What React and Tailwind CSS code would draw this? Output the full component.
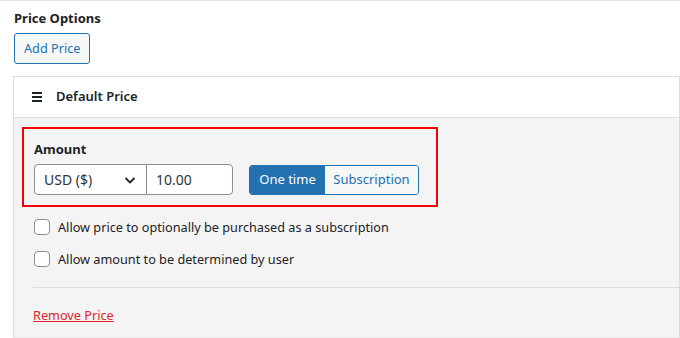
import React from 'react';

const font = { fontFamily: '"Noto Sans", "Open Sans", sans-serif' };

const Checkbox = ({ label }) => (
  <label className="flex items-center h-[16px]">
    <span className="w-[16px] h-[16px] rounded-[4px] border border-[#8c8f94] bg-white shrink-0" />
    <span className="ml-[8px] text-[12.7px] text-[#1d2327] leading-none">{label}</span>
  </label>
);

const App = () => {
  return (
    <div
      className="w-[680px] h-[338px] bg-white border-t border-[#e2e4e7] overflow-hidden flex flex-col"
      style={font}
    >
      {/* Price options heading */}
      <div className="pl-[14px] pt-[9px] text-[13px] font-bold text-[#1d2327] leading-[17px]">
        Price Options
      </div>
      <div className="pl-[14px] pt-[6px]">
        <button className="h-[31px] px-[9px] rounded-[3px] border border-[#2271b1] bg-[#f6f7f7] text-[#2271b1] text-[12.7px] leading-none">
          Add Price
        </button>
      </div>

      {/* Default price panel */}
      <div className="ml-[13px] mt-[12px] flex-1 border border-[#dcdcde] border-b-[#e8e8e8] flex flex-col">
        <div className="h-[41px] bg-white border-b border-[#dcdcde] flex items-center pl-[18px]">
          <svg width="10" height="10" viewBox="0 0 10 10" className="text-[#1d2327]">
            <rect x="0" y="0" width="10" height="2" fill="currentColor" />
            <rect x="0" y="4" width="10" height="2" fill="currentColor" />
            <rect x="0" y="8" width="10" height="2" fill="currentColor" />
          </svg>
          <span className="ml-[14px] text-[13px] font-semibold text-[#1d2327]">Default Price</span>
        </div>

        <div className="flex-1 bg-[#f4f4f4] pt-[9px] pl-[8px]">
          {/* Amount box */}
          <div className="w-[416px] h-[80px] border-2 border-[#f5000a] pl-[10px] pt-[12px]">
            <div className="text-[13px] font-bold text-[#1d2327] leading-[17px]">Amount</div>
            <div className="flex items-center mt-[6px]">
              <div className="flex h-[31px] rounded-[4px] border border-[#8c8f94] bg-white">
                <div className="w-[112px] flex items-center justify-between pl-[9px] pr-[9px] border-r border-[#8c8f94]">
                  <span className="text-[14px] text-[#2c3338]">USD ($)</span>
                  <svg width="14" height="14" viewBox="0 0 14 14" fill="none">
                    <path d="M2.5 5 L7 9.5 L11.5 5" stroke="#1d2327" strokeWidth="1.8" />
                  </svg>
                </div>
                <div className="w-[85px] flex items-center pl-[9px] text-[14px] text-[#2c3338]">10.00</div>
              </div>
              <div className="ml-[16px] flex h-[30px] rounded-[3px] border border-[#2271b1] overflow-hidden">
                <div className="w-[75px] bg-[#2271b1] text-white text-[13px] flex items-center justify-center">
                  One time
                </div>
                <div className="w-[93px] bg-[#f6f7f7] text-[#2271b1] text-[13px] flex items-center justify-center">
                  Subscription
                </div>
              </div>
            </div>
          </div>

          {/* Options */}
          <div className="pl-[12px] pt-[12px] flex flex-col gap-[16px]">
            <Checkbox label="Allow price to optionally be purchased as a subscription" />
            <Checkbox label="Allow amount to be determined by user" />
          </div>

          <div className="ml-[11px] mt-[20px] border-t border-[#dcdcde]" />

          <div className="pl-[11px] pt-[14px]">
            <a className="text-[12.7px] text-[#e0262b] underline leading-none">Remove Price</a>
          </div>
        </div>
      </div>
    </div>
  );
};

export default App;
